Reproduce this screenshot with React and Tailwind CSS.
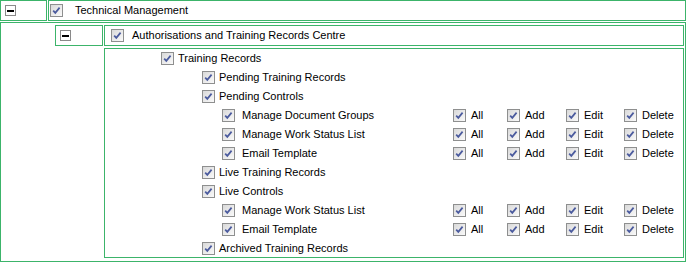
import React from "react";

const font = { fontFamily: '"Liberation Sans", Arial, sans-serif' };

const Check = () => (
  <span className="inline-flex w-[13px] h-[13px] shrink-0 items-center justify-center border border-[#8e8f8f] bg-gradient-to-br from-[#d9d9d9] to-[#fafafa]">
    <svg width="11" height="11" viewBox="0 0 11 11">
      <path
        d="M2.2 5.6 L4.3 7.9 L8.6 2.6"
        fill="none"
        stroke="#4b5b9e"
        strokeWidth="1.7"
      />
    </svg>
  </span>
);

const Minus = () => (
  <span className="inline-flex w-[11px] h-[11px] items-center justify-center border border-[#8a8a8a] bg-white">
    <span className="block w-[7px] h-[2px] bg-black" />
  </span>
);

const perms = [
  { label: "All", w: "w-[54px]" },
  { label: "Add", w: "w-[59px]" },
  { label: "Edit", w: "w-[58px]" },
  { label: "Delete", w: "w-auto" },
];

const rows = [
  { label: "Training Records", level: 0 },
  { label: "Pending Training Records", level: 1 },
  { label: "Pending Controls", level: 1 },
  { label: "Manage Document Groups", level: 2, perms: true },
  { label: "Manage Work Status List", level: 2, perms: true },
  { label: "Email Template", level: 2, perms: true },
  { label: "Live Training Records", level: 1 },
  { label: "Live Controls", level: 1 },
  { label: "Manage Work Status List", level: 2, perms: true },
  { label: "Email Template", level: 2, perms: true },
  { label: "Archived Training Records", level: 1 },
];

const indent = ["pl-[56px] gap-[4px]", "pl-[97px] gap-[4px]", "pl-[117px] gap-[7px]"];

export default function App() {
  return (
    <div className="w-[686px] h-[262px] bg-white text-[11px] text-black" style={font}>
      {/* top level */}
      <div className="flex gap-[1px]">
        <div className="w-[47px] h-[21px] border border-[#3cb46a] flex items-center pl-[4px]">
          <Minus />
        </div>
        <div className="w-[638px] h-[21px] border border-[#3cb46a] flex items-center pl-[1px] gap-[12px]">
          <Check />
          <span>Technical Management</span>
        </div>
      </div>

      {/* second level */}
      <div className="mt-[1px] w-[686px] h-[240px] border border-[#3cb46a] pt-[2px]">
        <div className="flex gap-[1px] ml-[54px]">
          <div className="w-[48px] h-[21px] border border-[#3cb46a] flex items-center pl-[4px]">
            <Minus />
          </div>
          <div className="w-[580px] h-[21px] border border-[#3cb46a] flex items-center pl-[6px] gap-[8px]">
            <Check />
            <span>Authorisations and Training Records Centre</span>
          </div>
        </div>

        <div className="ml-[103px] mt-[2px] w-[580px] h-[210px] border border-[#3cb46a]">
          {rows.map((r, i) => (
            <div key={i} className="flex h-[19px] items-center">
              <div className={`flex items-center ${indent[r.level]} ${r.perms ? "w-[348px]" : ""}`}>
                <Check />
                <span>{r.label}</span>
              </div>
              {r.perms &&
                perms.map((p) => (
                  <div key={p.label} className={`flex items-center gap-[5px] ${p.w}`}>
                    <Check />
                    <span>{p.label}</span>
                  </div>
                ))}
            </div>
          ))}
        </div>
      </div>
    </div>
  );
}
